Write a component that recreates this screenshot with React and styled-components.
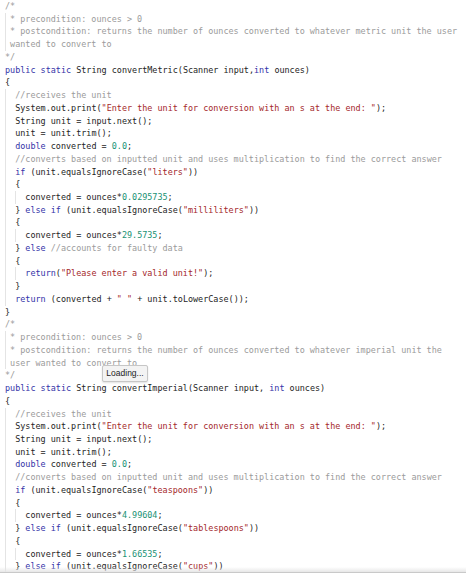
import React from 'react';
import styled, { createGlobalStyle } from 'styled-components';

const GlobalStyle = createGlobalStyle`
  html, body {
    margin: 0;
    padding: 0;
    background: #ffffff;
  }
`;

const Editor = styled.div`
  position: relative;
  width: 466px;
  height: 573px;
  overflow: hidden;
  box-sizing: border-box;
  padding: 0 0 0 5px;
  background: #ffffff;
  font-family: "DejaVu Sans Mono", "Liberation Mono", monospace;
  font-size: 8.45px;
  line-height: 12.73px;
  color: #1e1e1e;

  &::after {
    content: '';
    position: absolute;
    left: 0;
    right: 0;
    bottom: 0;
    height: 5px;
    background: linear-gradient(to bottom, rgba(255, 255, 255, 0), rgba(228, 228, 228, 0.9));
    border-bottom: 1px solid #c9c9c9;
  }
`;

const Line = styled.div`
  display: flex;
  align-items: stretch;
`;

const Indent = styled.span`
  flex: none;
  width: ${p => p.$w}px;
  box-sizing: border-box;
  border-left: 1px solid #e4e4e4;
`;

const Code = styled.span`
  flex: 1;
  min-width: 0;
  white-space: pre-wrap;
  word-break: normal;
`;

const Kw = styled.span`
  color: #3434a8;
`;

const Str = styled.span`
  color: #a4282b;
`;

const Num = styled.span`
  color: #1a9274;
`;

const Cmt = styled.span`
  color: #9b9b9b;
`;

const Tooltip = styled.div`
  position: absolute;
  left: 102px;
  top: 365px;
  width: 46px;
  height: 17px;
  box-sizing: border-box;
  display: flex;
  align-items: center;
  justify-content: center;
  background: #f3f3f3;
  border: 1px solid #c6c6c6;
  border-radius: 2px;
  box-shadow: 0 1px 2px rgba(0, 0, 0, 0.12);
  font-family: "Liberation Sans", Arial, sans-serif;
  font-size: 8.5px;
  color: #222222;
`;

const CHAR = 5.09;
const KEYWORDS = /^(public|static|int|double|if|else|return)$/;

// [indent in chars, text, isComment]
const source = [
  [0, '/*', true],
  [1, '* precondition: ounces > 0', true],
  [1, '* postcondition: returns the number of ounces converted to whatever metric unit the user wanted to convert to', true],
  [0, '*/', true],
  [0, 'public static String convertMetric(Scanner input,int ounces)'],
  [0, '{'],
  [2, '//receives the unit'],
  [2, 'System.out.print("Enter the unit for conversion with an s at the end: ");'],
  [2, 'String unit = input.next();'],
  [2, 'unit = unit.trim();'],
  [2, 'double converted = 0.0;'],
  [2, '//converts based on inputted unit and uses multiplication to find the correct answer'],
  [2, 'if (unit.equalsIgnoreCase("liters"))'],
  [2, '{'],
  [4, 'converted = ounces*0.0295735;'],
  [2, '} else if (unit.equalsIgnoreCase("milliliters"))'],
  [2, '{'],
  [4, 'converted = ounces*29.5735;'],
  [2, '} else //accounts for faulty data'],
  [2, '{'],
  [4, 'return("Please enter a valid unit!");'],
  [2, '}'],
  [2, 'return (converted + " " + unit.toLowerCase());'],
  [0, '}'],
  [0, '/*', true],
  [1, '* precondition: ounces > 0', true],
  [1, '* postcondition: returns the number of ounces converted to whatever imperial unit the user wanted to convert to', true],
  [0, '*/', true],
  [0, 'public static String convertImperial(Scanner input, int ounces)'],
  [0, '{'],
  [2, '//receives the unit'],
  [2, 'System.out.print("Enter the unit for conversion with an s at the end: ");'],
  [2, 'String unit = input.next();'],
  [2, 'unit = unit.trim();'],
  [2, 'double converted = 0.0;'],
  [2, '//converts based on inputted unit and uses multiplication to find the correct answer'],
  [2, 'if (unit.equalsIgnoreCase("teaspoons"))'],
  [2, '{'],
  [4, 'converted = ounces*4.99604;'],
  [2, '} else if (unit.equalsIgnoreCase("tablespoons"))'],
  [2, '{'],
  [4, 'converted = ounces*1.66535;'],
  [2, '} else if (unit.equalsIgnoreCase("cups"))'],
];

const TOKEN = /(\/\/.*$)|("(?:[^"\\]|\\.)*")|\b([A-Za-z_]\w*)\b|(\d+(?:\.\d+)?)/g;

function highlight(text) {
  const out = [];
  let last = 0;
  let m;
  let k = 0;
  TOKEN.lastIndex = 0;
  while ((m = TOKEN.exec(text)) !== null) {
    if (m.index > last) out.push(text.slice(last, m.index));
    if (m[1]) out.push(<Cmt key={k++}>{m[1]}</Cmt>);
    else if (m[2]) out.push(<Str key={k++}>{m[2]}</Str>);
    else if (m[3]) out.push(KEYWORDS.test(m[3]) ? <Kw key={k++}>{m[3]}</Kw> : m[3]);
    else if (m[4]) out.push(<Num key={k++}>{m[4]}</Num>);
    last = TOKEN.lastIndex;
  }
  if (last < text.length) out.push(text.slice(last));
  return out;
}

function CodeLine({ indent, text, comment }) {
  const guides = [];
  // one guide per indentation step (2 spaces, or 1 for block-comment bodies)
  let left = indent;
  while (left > 0) {
    const step = left >= 2 ? 2 : 1;
    guides.push(<Indent key={left} $w={step * CHAR} />);
    left -= step;
  }
  return (
    <Line>
      {guides}
      <Code>{comment ? <Cmt>{text}</Cmt> : highlight(text)}</Code>
    </Line>
  );
}

export default function App() {
  return (
    <>
      <GlobalStyle />
      <Editor>
        {source.map(([indent, text, comment], i) => (
          <CodeLine key={i} indent={indent} text={text} comment={comment} />
        ))}
        <Tooltip>Loading...</Tooltip>
      </Editor>
    </>
  );
}
